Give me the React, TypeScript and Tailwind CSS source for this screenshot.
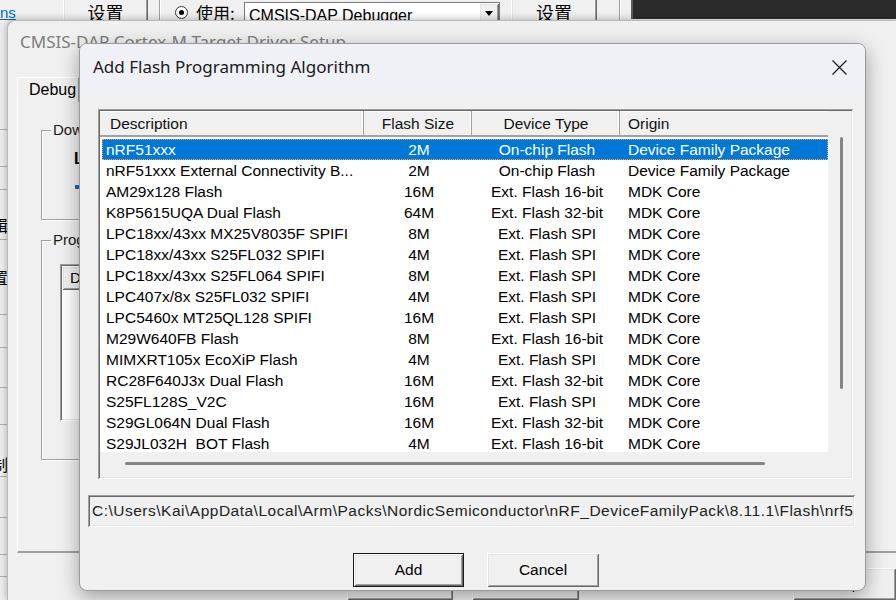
import React from "react";

const rows = [
  ["nRF51xxx", "2M", "On-chip Flash", "Device Family Package"],
  ["nRF51xxx External Connectivity B...", "2M", "On-chip Flash", "Device Family Package"],
  ["AM29x128 Flash", "16M", "Ext. Flash 16-bit", "MDK Core"],
  ["K8P5615UQA Dual Flash", "64M", "Ext. Flash 32-bit", "MDK Core"],
  ["LPC18xx/43xx MX25V8035F SPIFI", "8M", "Ext. Flash SPI", "MDK Core"],
  ["LPC18xx/43xx S25FL032 SPIFI", "4M", "Ext. Flash SPI", "MDK Core"],
  ["LPC18xx/43xx S25FL064 SPIFI", "8M", "Ext. Flash SPI", "MDK Core"],
  ["LPC407x/8x S25FL032 SPIFI", "4M", "Ext. Flash SPI", "MDK Core"],
  ["LPC5460x MT25QL128 SPIFI", "16M", "Ext. Flash SPI", "MDK Core"],
  ["M29W640FB Flash", "8M", "Ext. Flash 16-bit", "MDK Core"],
  ["MIMXRT105x EcoXiP Flash", "4M", "Ext. Flash SPI", "MDK Core"],
  ["RC28F640J3x Dual Flash", "16M", "Ext. Flash 32-bit", "MDK Core"],
  ["S25FL128S_V2C", "16M", "Ext. Flash SPI", "MDK Core"],
  ["S29GL064N Dual Flash", "16M", "Ext. Flash 32-bit", "MDK Core"],
  ["S29JL032H  BOT Flash", "4M", "Ext. Flash 16-bit", "MDK Core"],
];

const path =
  "C:\\Users\\Kai\\AppData\\Local\\Arm\\Packs\\NordicSemiconductor\\nRF_DeviceFamilyPack\\8.11.1\\Flash\\nrf52xxx.FLM";

const raised =
  "bg-[#f0f0f0] shadow-[inset_1px_1px_0_#ffffff,inset_-1px_-1px_0_#696969,inset_2px_2px_0_#e3e3e3,inset_-2px_-2px_0_#a0a0a0]";
const sunken =
  "shadow-[inset_1px_1px_0_#a0a0a0,inset_-1px_-1px_0_#ffffff,inset_2px_2px_0_#696969,inset_-2px_-2px_0_#e3e3e3]";

function GroupBox({ label, className, children }: { label: string; className: string; children?: React.ReactNode }) {
  return (
    <div className={`relative border border-[#a0a0a0] shadow-[inset_1px_1px_0_#ffffff,1px_1px_0_#ffffff] ${className}`}>
      <span className="absolute -top-[11px] left-[9px] bg-[#f0f0f0] px-[2px] text-[15px] leading-[20px] text-[#1a1a1a]">
        {label}
      </span>
      {children}
    </div>
  );
}

function App() {
  return (
    <div className="relative w-[896px] h-[600px] overflow-hidden bg-[#f0f0f0] font-['Liberation_Sans',Arial,sans-serif] text-black">
      {/* Back window */}
      <div className="absolute inset-0 flex flex-col">
        <div className="h-[20px] flex items-start">
          <span className="w-[63px] pt-[4px] text-[15px] leading-[18px] text-[#0066cc] underline">ns</span>
          <div className={`-mt-[4px] w-[85px] h-[32px] flex items-center justify-center text-[18px] font-['Noto_Sans_CJK_SC',sans-serif] ${raised}`}>
            设置
          </div>
          <div className="ml-[11px] w-[2px] h-[24px] border-l border-[#a0a0a0] bg-white" />
          <div className="ml-[14px] mt-[6px] w-[13px] h-[13px] rounded-full border border-[#333] bg-white flex items-center justify-center">
            <div className="w-[5px] h-[5px] rounded-full bg-black" />
          </div>
          <span className="ml-[8px] w-[48px] pt-[2px] text-[17px] leading-[22px] font-['Noto_Sans_CJK_SC',sans-serif]">使用:</span>
          <div className="mt-[2px] w-[256px] h-[26px] bg-white border border-[#7a7a7a] flex">
            <span className="flex-1 pl-[4px] pt-[3px] text-[16px] leading-[20px]">CMSIS-DAP Debugger</span>
            <div className={`w-[20px] flex justify-center pt-[8px] ${raised}`}>
              <svg width="8" height="5" viewBox="0 0 8 5">
                <path d="M0 0h8L4 5z" fill="#000" />
              </svg>
            </div>
          </div>
          <div className={`ml-[11px] -mt-[4px] w-[86px] h-[32px] flex items-center justify-center text-[18px] font-['Noto_Sans_CJK_SC',sans-serif] ${raised}`}>
            设置
          </div>
          <div className="ml-[22px] w-[2px] h-[24px] border-l border-[#a0a0a0] bg-white" />
          <div className="ml-[10px] flex-1 h-[19px] bg-[#2b2b2b] border-l-2 border-[#5c5c5c]" />
        </div>
        <div className="flex-1 flex">
          <div className="w-[8px] flex flex-col overflow-hidden text-[16px] font-['Noto_Sans_CJK_SC',sans-serif]">
            <div className="h-[110px] border-b border-[#b0b0b0]" />
            <div className="h-[37px] border-b border-[#b0b0b0]" />
            <div className="h-[23px] border-b border-[#b0b0b0]" />
            <div className="h-[50px] border-b border-[#b0b0b0] flex items-end pb-[2px]">
              <span className="-ml-[8px]">辑</span>
            </div>
            <div className="h-[75px] border-b border-[#b0b0b0] flex items-center">
              <span className="-ml-[8px]">置</span>
            </div>
            <div className="h-[33px] border-b border-[#b0b0b0]" />
            <div className="h-[40px] border-b border-[#b0b0b0]" />
            <div className="h-[37px] border-b border-[#b0b0b0]" />
            <div className="h-[52px] border-b border-[#b0b0b0] flex items-end">
              <span className="-ml-[8px]">制</span>
            </div>
            <div className="h-[41px] border-b border-[#b0b0b0]" />
            <div className="h-[37px] border-b border-[#b0b0b0]" />
            <div className="h-[22px] border-b border-[#b0b0b0]" />
          </div>
        </div>
      </div>

      {/* Target driver setup window */}
      <div className="absolute left-[7px] top-[20px] w-[889px] h-[580px] rounded-tl-[8px] border-l border-t border-[#b8b8b8] bg-[#f0f0f0] shadow-[0_0_8px_rgba(0,0,0,0.3)] flex flex-col">
        <div className="h-[44px] pl-[12px] pt-[9px] text-[17px] leading-[24px] text-[#7d7d7d] font-['Noto_Sans',sans-serif]">
          CMSIS-DAP Cortex-M Target Driver Setup
        </div>
        <div className="mt-[13px] ml-[9px] flex">
          <div className="h-[25px] w-[62px] border-t border-l border-white border-r border-r-[#a0a0a0] pl-[11px] pt-[2px] text-[16px] leading-[20px]">
            Debug
          </div>
        </div>
        <div className="ml-[9px] h-[460px] border-l border-white border-b-2 border-b-[#a0a0a0] pl-[23px] pt-[28px] flex flex-col">
          <GroupBox label="Dow" className="w-[300px] h-[90px]">
            <div className="ml-[32px] mt-[18px] text-[16px] font-bold leading-[20px]">LOAD</div>
            <div className="ml-[33px] mt-[16px] w-[10px] h-[4px] bg-[#1f5fbf]" />
          </GroupBox>
          <GroupBox label="Prog" className="mt-[20px] w-[300px] h-[220px]">
            <div className={`ml-[18px] mt-[23px] h-[157px] bg-white p-[2px] ${sunken}`}>
              <div className={`h-[24px] pl-[8px] text-[15px] leading-[24px] ${raised}`}>D</div>
            </div>
          </GroupBox>
        </div>
        <div className="mt-[15px] flex text-[15px]">
          <div className={`ml-[339px] w-[116px] h-[32px] flex items-center justify-center text-[#555] ${raised}`}>OK</div>
          <div className={`ml-[19px] w-[117px] h-[32px] flex items-center justify-center text-[#555] ${raised}`}>Cancel</div>
          <div className={`ml-[214px] w-[112px] h-[32px] flex items-center justify-center ${raised}`}>Help</div>
        </div>
      </div>

      {/* Add Flash Programming Algorithm dialog */}
      <div className="absolute left-[79px] top-[43px] w-[787px] h-[548px] rounded-[8px] border border-[#9a9a9a] bg-[#f0f0f0] shadow-[0_6px_20px_rgba(0,0,0,0.35)] overflow-hidden flex flex-col">
        <div className="h-[46px] bg-[#eff1f7] flex items-center justify-between pl-[13px] pr-[18px]">
          <span className="text-[17px] text-[#1a1a1a] font-['Noto_Sans',sans-serif]">Add Flash Programming Algorithm</span>
          <svg width="15" height="15" viewBox="0 0 15 15">
            <path d="M0.5 0.5L14.5 14.5M14.5 0.5L0.5 14.5" stroke="#1a1a1a" strokeWidth="1.2" />
          </svg>
        </div>

        <div className="flex-1 flex flex-col">
          {/* List */}
          <div className={`mt-[19px] ml-[18px] w-[755px] h-[370px] p-[2px] ${sunken}`}>
            <div className="h-full flex flex-col">
              <div className="flex">
                <div className="w-[728px] flex flex-col">
                  <div className="h-[26px] flex text-[15.5px] text-[#111] border-b-2 border-b-[#a0a0a0] bg-[#f0f0f0] shadow-[inset_0_1px_0_#ffffff]">
                    <div className="w-[264px] pl-[10px] pt-[2px] leading-[22px] shadow-[inset_-1px_0_0_#a0a0a0,inset_-2px_0_0_#ffffff]">Description</div>
                    <div className="w-[108px] text-center pt-[2px] leading-[22px] shadow-[inset_-1px_0_0_#a0a0a0,inset_-2px_0_0_#ffffff]">Flash Size</div>
                    <div className="w-[148px] text-center pt-[2px] leading-[22px] shadow-[inset_-1px_0_0_#a0a0a0,inset_-2px_0_0_#ffffff]">Device Type</div>
                    <div className="w-[208px] pl-[8px] pt-[2px] leading-[22px]">Origin</div>
                  </div>
                  <div className="h-[315px] bg-white pt-[2px] overflow-hidden">
                    {rows.map((r, i) => (
                      <div
                        key={i}
                        className={`h-[21px] flex items-center text-[15.5px] whitespace-pre ${
                          i === 0
                            ? "ml-[2px] bg-[#0078d7] text-white border border-dotted border-[#f2a550]"
                            : "ml-[2px] border border-transparent"
                        }`}
                      >
                        <div className="w-[262px] pl-[3px]">{r[0]}</div>
                        <div className="w-[108px] text-center">{r[1]}</div>
                        <div className="w-[148px] text-center">{r[2]}</div>
                        <div className="w-[206px] pl-[7px]">{r[3]}</div>
                      </div>
                    ))}
                  </div>
                </div>
                <div className="flex-1 pl-[12px] pt-[26px]">
                  <div className="w-[3px] h-[252px] rounded-full bg-[#858585]" />
                </div>
              </div>
              <div className="flex-1 pl-[25px] pt-[10px]">
                <div className="w-[640px] h-[3px] rounded-full bg-[#858585]" />
              </div>
            </div>
          </div>

          {/* Path */}
          <div className={`mt-[16px] ml-[8px] w-[767px] h-[32px] pl-[4px] pr-[2px] flex items-center overflow-hidden whitespace-nowrap text-[15.5px] tracking-[0.5px] text-[#222] ${sunken}`}>
            <span className="overflow-hidden">{path}</span>
          </div>

          {/* Buttons */}
          <div className="mt-[26px] flex text-[15.5px]">
            <div className="ml-[273px] w-[111px] h-[34px] border border-[#1a1a1a]">
              <div className={`h-full flex items-center justify-center ${raised}`}>Add</div>
            </div>
            <div className={`ml-[23px] w-[112px] h-[34px] flex items-center justify-center ${raised}`}>Cancel</div>
          </div>
        </div>
      </div>
    </div>
  );
}

export default App;
